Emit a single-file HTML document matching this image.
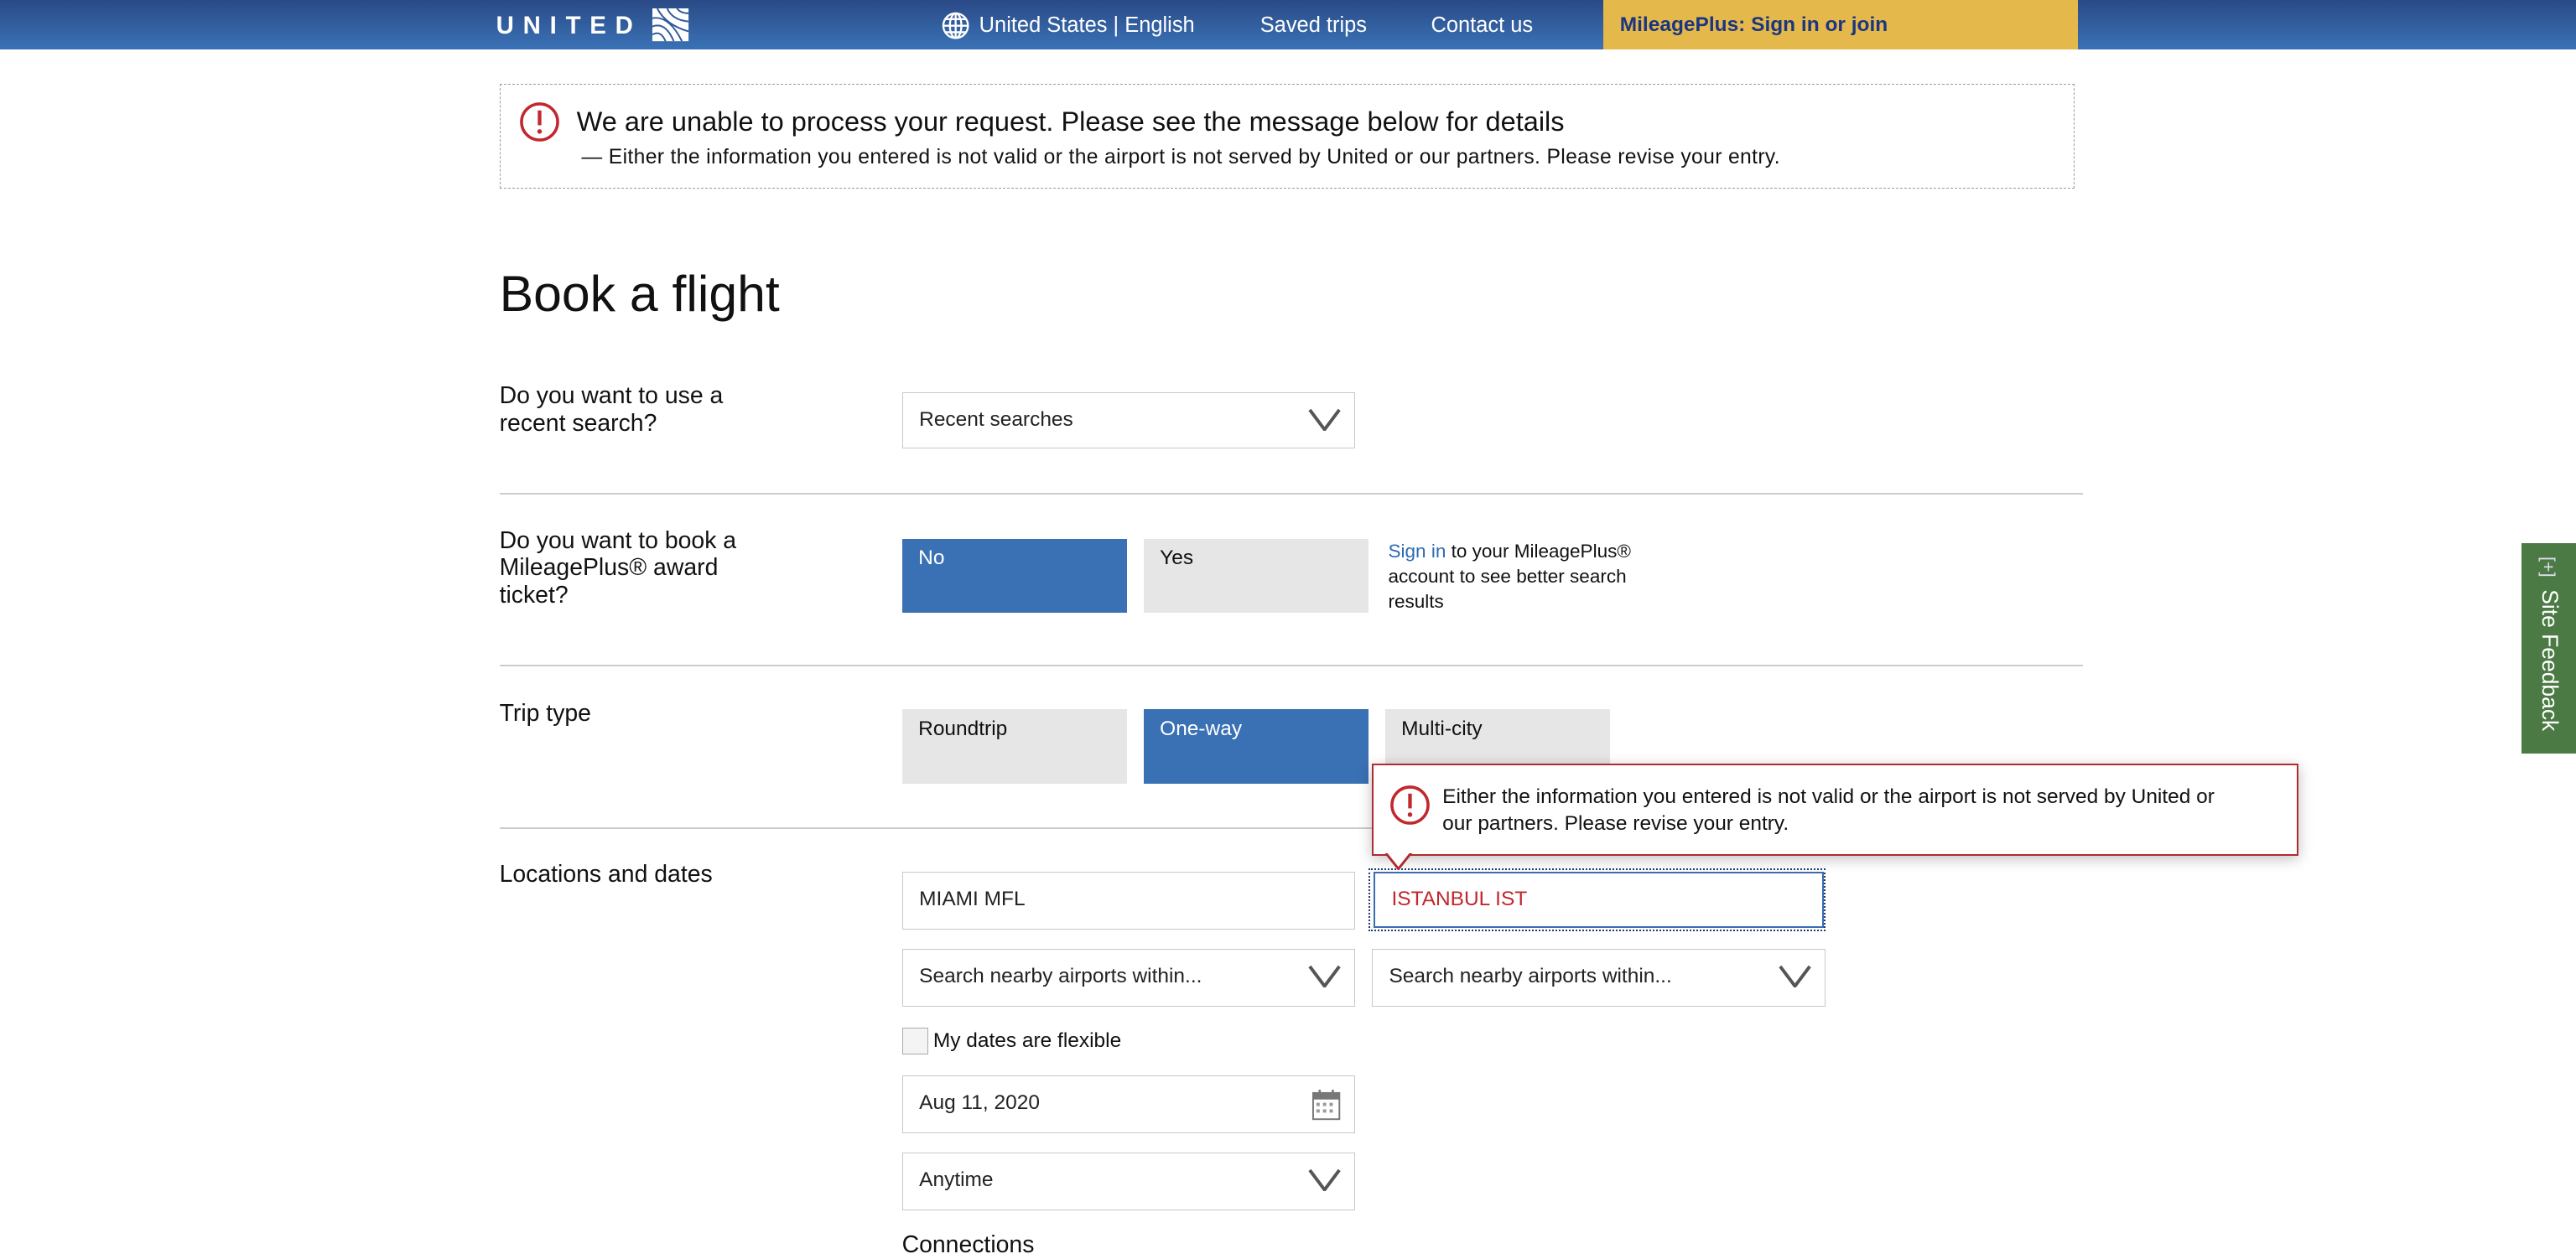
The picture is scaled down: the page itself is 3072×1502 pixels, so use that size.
<!DOCTYPE html>
<html><head><meta charset="utf-8"><style>
html,body{margin:0;padding:0;background:#fff;overflow:hidden;width:3072px;height:1502px}
#w{zoom:1.95918;width:1568px;height:767px;position:relative;font-family:"Liberation Sans",sans-serif;color:#111}
.a{position:absolute}
.hdr{left:0;top:0;width:1568px;height:30px;background:linear-gradient(#2a4a86,#3a72b6)}
.nav{color:#fff;font-size:13px;top:8px}
.box{border:1px solid #c8c8c8;background:#fff;box-sizing:border-box;font-size:12.5px;color:#222;padding-left:10px;line-height:33px}
.chev{position:absolute;right:8px;top:9px}
.btn{font-size:12.5px;box-sizing:border-box;padding:5px 10px}
.blue{background:#3a71b4;color:#fff}
.gray{background:#e6e6e6;color:#111}
.hr{height:1px;background:#ccc;left:304px;width:964px}
.lbl{left:304px;font-size:14.5px;line-height:16.5px;color:#111}
</style></head><body><div id="w">
<div class="a hdr"></div>
<div class="a" style="left:302px;top:7px;color:#fff;font-weight:bold;font-size:15px;letter-spacing:5.5px">UNITED</div>
<svg class="a" style="left:397px;top:5px" width="24" height="21" viewBox="0 0 24 21"><rect width="22" height="20" fill="#fff"/><g fill="none" stroke="#2f5a9a" stroke-width="1"><path d="M0 6 Q10 4 18 20"/><path d="M0 11 Q8 8 13 20"/><path d="M0 16 Q5 13 8 20"/><path d="M3 0 Q8 10 22 14"/><path d="M9 0 Q12 7 22 8"/><path d="M15 0 Q17 3 22 3"/></g></svg>
<svg class="a" style="left:573px;top:7px" width="17" height="17" viewBox="0 0 17 17"><g fill="none" stroke="#fff" stroke-width="1.2"><circle cx="8.5" cy="8.5" r="7.5"/><ellipse cx="8.5" cy="8.5" rx="3.5" ry="7.5"/><path d="M1 8.5h15M2.5 4.5h12M2.5 12.5h12M8.5 1v15"/></g></svg>
<div class="a nav" style="left:596px">United States | English</div>
<div class="a nav" style="left:767px">Saved trips</div>
<div class="a nav" style="left:871px">Contact us</div>
<div class="a" style="left:976px;top:0;width:289px;height:30px;background:#e5b84b"></div>
<div class="a nav" style="left:986px;color:#1b3680;font-weight:bold;font-size:12.5px;top:8px">MileagePlus: Sign in or join</div>

<div class="a" style="left:304px;top:51px;width:958px;height:63px;border:1px dashed #999"></div>
<svg class="a" style="left:316px;top:62px" width="25" height="25" viewBox="0 0 25 25"><circle cx="12.5" cy="12.5" r="11" fill="none" stroke="#c0282e" stroke-width="1.8"/><rect x="11.4" y="5.5" width="2.2" height="9" fill="#c0282e"/><circle cx="12.5" cy="18.3" r="1.4" fill="#c0282e"/></svg>
<div class="a" style="left:351px;top:65px;font-size:16.6px">We are unable to process your request. Please see the message below for details</div>
<div class="a" style="left:354px;top:89px;font-size:12.6px;letter-spacing:0.18px">— Either the information you entered is not valid or the airport is not served by United or our partners. Please revise your entry.</div>

<div class="a" style="left:304px;top:161px;font-size:31px;color:#111;font-weight:300">Book a flight</div>

<div class="a lbl" style="top:233px">Do you want to use a<br>recent search?</div>
<div class="a box" style="left:549px;top:239px;width:276px;height:34px">Recent searches<svg class="chev" width="20" height="14" viewBox="0 0 20 14"><path d="M1 1L10 13L19 1" fill="none" stroke="#555" stroke-width="2"/></svg></div>
<div class="a hr" style="top:300px"></div>

<div class="a lbl" style="top:321px">Do you want to book a<br>MileagePlus® award<br>ticket?</div>
<div class="a btn blue" style="left:549px;top:328px;width:137px;height:45px">No</div>
<div class="a btn gray" style="left:696px;top:328px;width:137px;height:45px">Yes</div>
<div class="a" style="left:845px;top:328px;font-size:11.5px;line-height:15.5px;width:160px"><span style="color:#2f6bb5">Sign in</span> to your MileagePlus® account to see better search results</div>
<div class="a hr" style="top:405px"></div>

<div class="a lbl" style="top:426px">Trip type</div>
<div class="a btn gray" style="left:549px;top:432px;width:137px;height:45px">Roundtrip</div>
<div class="a btn blue" style="left:696px;top:432px;width:137px;height:45px">One-way</div>
<div class="a btn gray" style="left:843px;top:432px;width:137px;height:45px">Multi-city</div>
<div class="a hr" style="top:504px"></div>

<div class="a lbl" style="top:524px">Locations and dates</div>
<div class="a box" style="left:549px;top:531px;width:276px;height:35px">MIAMI MFL</div>
<div class="a" style="left:833px;top:529px;width:278px;height:38px;border:1.5px dotted #1d3a70;box-sizing:border-box"></div>
<div class="a box" style="left:836px;top:531px;width:274px;height:34px;border:1.5px solid #3a6cb0;color:#c0282e;line-height:32px">ISTANBUL IST</div>
<div class="a box" style="left:549px;top:578px;width:276px;height:35px">Search nearby airports within...<svg class="chev" width="20" height="14" viewBox="0 0 20 14"><path d="M1 1L10 13L19 1" fill="none" stroke="#555" stroke-width="2"/></svg></div>
<div class="a box" style="left:835px;top:578px;width:276px;height:35px">Search nearby airports within...<svg class="chev" width="20" height="14" viewBox="0 0 20 14"><path d="M1 1L10 13L19 1" fill="none" stroke="#555" stroke-width="2"/></svg></div>
<div class="a" style="left:549px;top:626px;width:16px;height:16px;border:1px solid #aaa;box-sizing:border-box;background:#f4f4f4"></div>
<div class="a" style="left:568px;top:627px;font-size:12.5px">My dates are flexible</div>
<div class="a box" style="left:549px;top:655px;width:276px;height:35px">Aug 11, 2020<svg class="a" style="right:8px;top:7px" width="18" height="20" viewBox="0 0 18 20"><rect x="1" y="3" width="16" height="16" fill="#fff" stroke="#777"/><rect x="1" y="3" width="16" height="4" fill="#777"/><g fill="#999"><rect x="3" y="9" width="2" height="2"/><rect x="7" y="9" width="2" height="2"/><rect x="11" y="9" width="2" height="2"/><rect x="3" y="13" width="2" height="2"/><rect x="7" y="13" width="2" height="2"/><rect x="11" y="13" width="2" height="2"/></g><path d="M5 1v4M13 1v4" stroke="#777" stroke-width="1.3"/></svg></div>
<div class="a box" style="left:549px;top:702px;width:276px;height:35px">Anytime<svg class="chev" width="20" height="14" viewBox="0 0 20 14"><path d="M1 1L10 13L19 1" fill="none" stroke="#555" stroke-width="2"/></svg></div>
<div class="a" style="left:549px;top:750px;font-size:14.5px">Connections</div>

<div class="a" style="left:835px;top:465px;width:564px;height:56px;border:1.5px solid #b02a2e;box-sizing:border-box;background:#fff;box-shadow:0 2px 8px rgba(0,0,0,.25)"></div>
<svg class="a" style="left:843px;top:518px" width="18" height="12" viewBox="0 0 18 12"><path d="M0 1L8 11L16 1" fill="#fff" stroke="#b02a2e" stroke-width="1.5"/><rect x="0" y="0" width="17" height="1.5" fill="#fff"/></svg>
<svg class="a" style="left:846px;top:478px" width="25" height="25" viewBox="0 0 25 25"><circle cx="12.5" cy="12.5" r="11" fill="none" stroke="#c0282e" stroke-width="1.8"/><rect x="11.4" y="5.5" width="2.2" height="9" fill="#c0282e"/><circle cx="12.5" cy="18.3" r="1.4" fill="#c0282e"/></svg>
<div class="a" style="left:878px;top:477px;width:500px;font-size:12.5px;line-height:16.5px">Either the information you entered is not valid or the airport is not served by United or<br>our partners. Please revise your entry.</div>

<div class="a" style="left:1535px;top:331px;width:33px;height:128px;background:#4b7a44"></div>
<div class="a" style="left:1537px;top:339px;width:128px;height:30px;transform-origin:0 0;transform:rotate(90deg) translate(0,-30px);color:#fff;font-size:13.5px;line-height:30px;white-space:nowrap"><span style="font-size:11px;color:#dde">[+]</span>&nbsp; Site Feedback</div>
</div></body></html>
